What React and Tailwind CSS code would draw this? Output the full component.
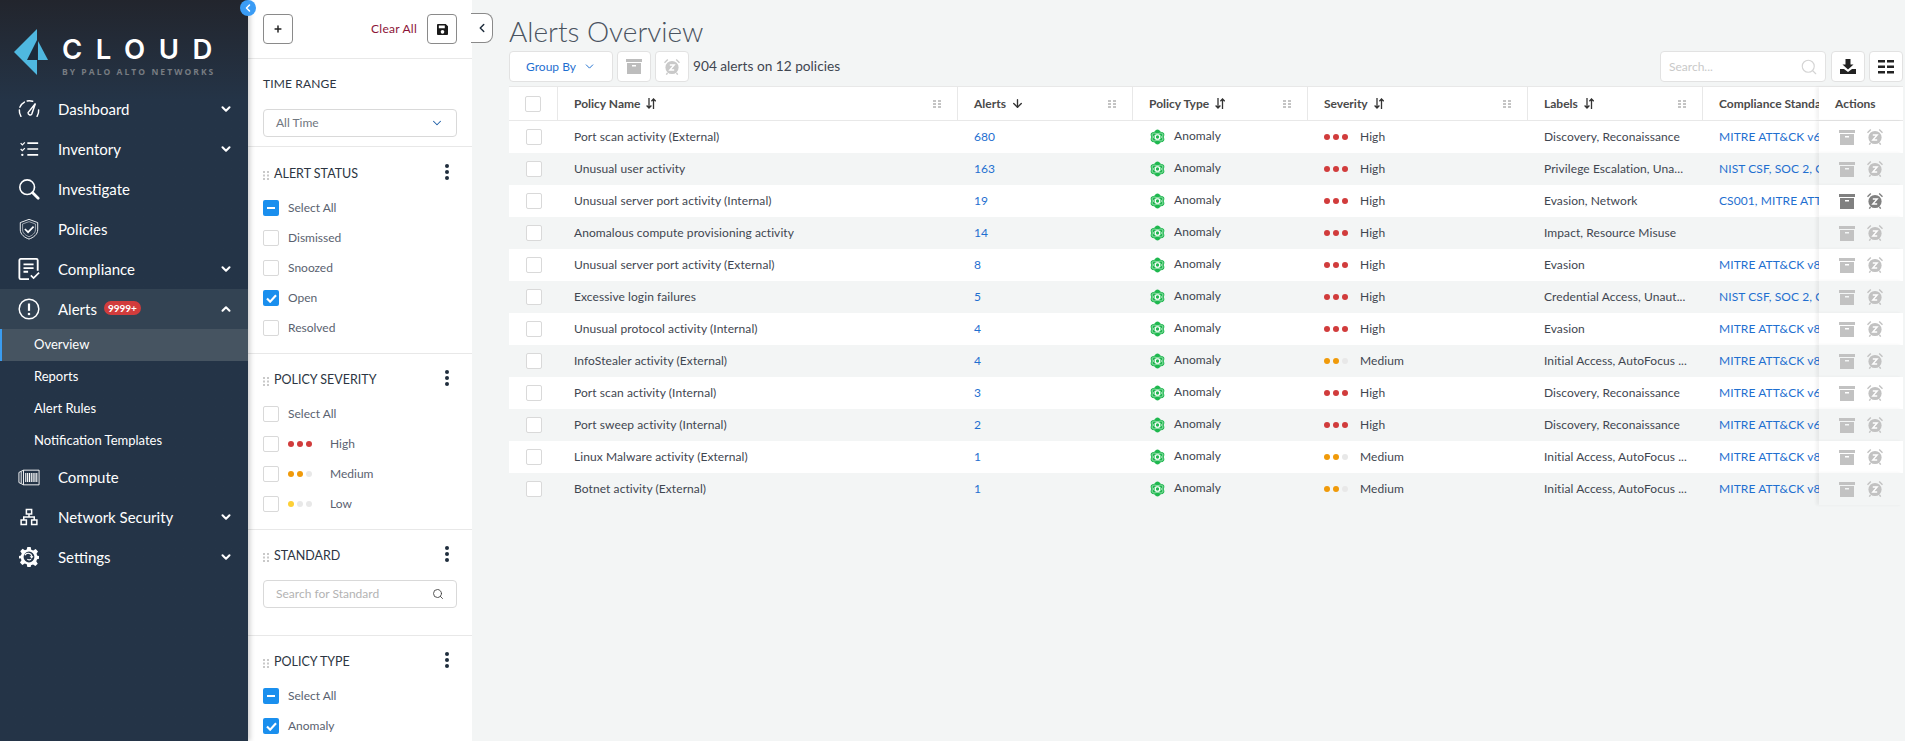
import React from "react";
import { ChevronDown, ChevronUp, ChevronLeft, ArrowDown, Search, Plus } from "lucide-react";

const GaugeIcon = () => (
  <svg viewBox="0 0 24 24" className="w-[22px] h-[22px]" fill="none" stroke="white" strokeWidth="1.6" strokeLinecap="round">
    <path d="M3.2 20A11 11 0 0 1 1.500 13" /><path d="M2 10A11 11 0 0 1 7 4.400" /><path d="M10 3.200a11 11 0 0 1 6 .4" /><path d="M22.500 13a11 11 0 0 1-1.700 7" /><path d="M11 16 19 6l-4 11.500a2.200 2.200 0 0 1-4-1.500z" />
  </svg>
);
const ListIcon = () => (
  <svg viewBox="0 0 24 24" className="w-[20px] h-[20px]" fill="none" stroke="white" strokeWidth="2">
    <path d="M10 5h13M10 12h13M10 19h13" /><path d="m2 5 2 2 3-3M2 12l2 2 3-3" strokeWidth="1.5" /><circle cx="4" cy="19" r="1.4" fill="white" stroke="none" />
  </svg>
);
const SearchBig = () => (
  <svg viewBox="0 0 24 24" className="w-[22px] h-[22px]" fill="none" stroke="white">
    <circle cx="10" cy="10" r="8" strokeWidth="1.8" /><path d="m16 16 6 6" strokeWidth="3" strokeLinecap="round" />
  </svg>
);
const ShieldIcon = () => (
  <svg viewBox="0 0 24 24" className="w-[22px] h-[22px]" fill="none" stroke="white" strokeWidth="1">
    <path d="M12 1.500 21.500 5v8c0 5-5 8.500-9.500 10C7.500 21.500 2.500 18 2.500 13V5z" /><path d="M12 4 19 6.500V13c0 3.500-3.500 6-7 7.500C8.500 19 5 16.500 5 13V6.500z" opacity=".6" /><path d="m7.500 12 3.500 3.500 6-6" strokeWidth="1.800" />
  </svg>
);
const ComplianceIcon = () => (
  <svg viewBox="0 0 24 24" className="w-[22px] h-[22px]" fill="none" stroke="white" strokeWidth="2">
    <path d="M12 23H3a1.500 1.500 0 0 1-1.500-1.500v-19A1.500 1.500 0 0 1 3 1h17a1.500 1.500 0 0 1 1.500 1.500V14" /><path d="M6 7h11M6 11h11M6 15h5" /><path d="m14 19 3 3 6-6" strokeWidth="1.8" />
  </svg>
);
const AlertCircle = () => (
  <svg viewBox="0 0 24 24" className="w-[22px] h-[22px]" fill="none" stroke="white" strokeWidth="1.600">
    <circle cx="12" cy="12" r="10.700" /><path d="M12 6v8" strokeWidth="2.400" /><circle cx="12" cy="17.500" r="1.400" fill="white" stroke="none" />
  </svg>
);
const ComputeIcon = () => (
  <svg viewBox="0 0 24 18" className="w-[22px] h-[17px]" fill="none" stroke="white" strokeWidth="1">
    <path d="M1 3.500 6 1h17v16H6l-5-2.500z" /><path d="M6 1v16" /><path d="M3.500 2.500v13" /><path d="M8.500 4v10M10.500 4v10M12.500 4v10M14.500 4v10M16.500 4v10M18.500 4v10M20.500 4v10" strokeWidth="1.200" />
  </svg>
);
const NetworkIcon = () => (
  <svg viewBox="0 0 24 24" className="w-[18px] h-[18px]" fill="none" stroke="white" strokeWidth="2">
    <rect x="8.500" y="2" width="7" height="6" /><rect x="1.500" y="16" width="7" height="6" /><rect x="15.500" y="16" width="7" height="6" /><path d="M12 8v4M5 16v-4h14v4" />
  </svg>
);
const GearIcon = () => (
  <svg viewBox="0 0 24 24" className="w-[20px] h-[20px]" fill="white">
    <path fillRule="evenodd" d="M10 0h4l.7 3.300 2.400 1 2.900-1.800 2.800 2.800-1.800 2.900 1 2.400L25 11v3l-3.300.7-1 2.400 1.800 2.900-2.800 2.800-2.900-1.800-2.400 1L14 24h-4l-.7-3.300-2.400-1L4 21.500l-2.800-2.800L3 15.800l-1-2.400L-1 14v-3l3.300-.7 1-2.400-1.800-2.900L4.300 2.200l2.900 1.800 2.100-.9zM12 5.500a6.500 6.500 0 1 0 0 13 6.500 6.500 0 0 0 0-13z" />
    <path d="M12 8a4 4 0 0 1 3.800 3h-2l2.500 3 2-3h-1a5.500 5.500 0 0 0-10-1.500l1.500.8A4 4 0 0 1 12 8z" transform="translate(-1 0)" />
    <path d="M9.500 15a4 4 0 0 0 5.500 0l-1-1a3 3 0 0 1-3.500 0z" />
  </svg>
);

const NavRow = ({ icon, label, chevron, active, badge }) => (
  <div className={`h-[40px] flex items-center shrink-0 pl-[17px] pr-[15px] ${active ? "bg-[#334353]" : ""}`}>
    <div className="w-[24px] flex justify-center shrink-0">{icon}</div>
    <span className="ml-[17px] text-[15px] text-white">{label}</span>
    {badge && <span className="ml-[7px] -mt-[2px] h-[14px] px-[4px] rounded-full bg-[#d13c3c] text-white text-[10px] leading-[14px] font-bold">{badge}</span>}
    <div className="ml-auto">
      {chevron === "down" && <ChevronDown size={14} strokeWidth={3.500} color="white" />}
      {chevron === "up" && <ChevronUp size={14} strokeWidth={3.500} color="white" />}
    </div>
  </div>
);
const SubRow = ({ label, active }) => (
  <div className={`h-[32px] flex items-center shrink-0 text-[13px] text-white pl-[34px] ${active ? "bg-[#465461] border-l-2 border-[#3a9cf0] !pl-[32px]" : ""}`}>{label}</div>
);

const Sidebar = () => (
  <aside className="relative z-10 w-[248px] shrink-0 flex flex-col bg-gradient-to-b from-[#22252d] to-[#243447] to-[100px] shadow-[2px_0_5px_rgba(0,0,0,0.2)]">
    <div className="h-[89px] shrink-0 flex items-center pl-[14px] pt-[15px]">
      <svg viewBox="0 0 35 46" className="w-[35px] h-[46px] shrink-0">
        <polygon points="0,23 23,0 23,46" fill="#4fb8e0" />
        <polygon points="13,31 23,11 23,31" fill="#1c2a3a" />
        <polygon points="24,12 34,31 24,31" fill="#4fb8e0" />
      </svg>
      <div className="ml-[13px] flex flex-col pt-[7px]">
        <span className="text-[27.500px] leading-[28px] font-semibold tracking-[13.500px] text-white font-['Inter',sans-serif]">CLOUD</span>
        <span className="mt-[4px] text-[8.500px] leading-[10px] font-bold tracking-[2.050px] text-[#777c82] font-['Open_Sans',sans-serif] whitespace-nowrap">BY PALO ALTO NETWORKS</span>
      </div>
    </div>
    <NavRow icon={<GaugeIcon />} label="Dashboard" chevron="down" />
    <NavRow icon={<ListIcon />} label="Inventory" chevron="down" />
    <NavRow icon={<SearchBig />} label="Investigate" />
    <NavRow icon={<ShieldIcon />} label="Policies" />
    <NavRow icon={<ComplianceIcon />} label="Compliance" chevron="down" />
    <NavRow icon={<AlertCircle />} label="Alerts" chevron="up" active badge="9999+" />
    <SubRow label="Overview" active />
    <SubRow label="Reports" />
    <SubRow label="Alert Rules" />
    <SubRow label="Notification Templates" />
    <NavRow icon={<ComputeIcon />} label="Compute" />
    <NavRow icon={<NetworkIcon />} label="Network Security" chevron="down" />
    <NavRow icon={<GearIcon />} label="Settings" chevron="down" />
    <button className="absolute -right-[8px] top-0 w-[16px] h-[16px] rounded-full bg-[#3a9cf5] flex items-center justify-center">
      <ChevronLeft size={12} strokeWidth={3} color="white" />
    </button>
  </aside>
);

const Grip = ({ className = "" }) => (
  <svg viewBox="0 0 8 8" className={`w-[8px] h-[8px] ${className}`} fill="#c4c4c4">
    <rect x="0" y="0" width="3" height="2" /><rect x="5" y="0" width="3" height="2" />
    <rect x="0" y="3" width="3" height="2" /><rect x="5" y="3" width="3" height="2" />
    <rect x="0" y="6" width="3" height="2" /><rect x="5" y="6" width="3" height="2" />
  </svg>
);
const GripSmall = () => (
  <svg viewBox="0 0 6 9" preserveAspectRatio="none" className="w-[6px] h-[9px] mr-[5px] mt-[2px] shrink-0" fill="#c9c9c9">
    {[0, 3.500, 7].map((y) => <g key={y}><rect x="0" y={y} width="2" height="2" /><rect x="4" y={y} width="2" height="2" /></g>)}
  </svg>
);
const Kebab = () => (
  <div className="flex flex-col gap-[2px] -mt-[4px]">
    <span className="w-[4px] h-[4px] rounded-full bg-[#1f2d3d]" />
    <span className="w-[4px] h-[4px] rounded-full bg-[#1f2d3d]" />
    <span className="w-[4px] h-[4px] rounded-full bg-[#1f2d3d]" />
  </div>
);
const Check = ({ state }) => {
  if (state === "minus")
    return <span className="w-[16px] h-[16px] shrink-0 rounded-[2px] bg-[#1a8fee] flex items-center justify-center"><span className="w-[8px] h-[2px] bg-white" /></span>;
  if (state === "check")
    return (
      <span className="w-[16px] h-[16px] shrink-0 rounded-[2px] bg-[#1a8fee] flex items-center justify-center">
        <svg viewBox="0 0 12 10" className="w-[11px] h-[9px]" fill="none" stroke="white" strokeWidth="2.400"><path d="m1 5 3.500 3.500L11 1.500" /></svg>
      </span>
    );
  return <span className="w-[16px] h-[16px] shrink-0 rounded-[2px] border border-[#d9d9d9] bg-white" />;
};
const Dots = ({ on, color }) => (
  <div className="flex items-center w-[24px] justify-between shrink-0">
    {[0, 1, 2].map((i) => (
      <span key={i} className="w-[6px] h-[6px] rounded-full" style={{ background: i < on ? color : "#e8e8e8" }} />
    ))}
  </div>
);
const FilterRow = ({ state, label, dots }) => (
  <div className="h-[30px] flex items-center">
    <Check state={state} />
    {dots ? (
      <div className="ml-[9px] flex items-center">
        {dots}
        <span className="ml-[18px] text-[12px] text-[#5a6270]">{label}</span>
      </div>
    ) : (
      <span className="ml-[9px] text-[12px] text-[#5a6270]">{label}</span>
    )}
  </div>
);
const FilterHead = ({ label }) => (
  <div className="h-[20px] flex items-center">
    <GripSmall />
    <span className="text-[12.500px] text-[#2c3542]">{label}</span>
    <div className="ml-auto mr-[8px]"><Kebab /></div>
  </div>
);
const Field = ({ className = "", children }) => (
  <div className={`h-[28px] rounded-[4px] border border-[#d9d9d9] bg-white flex items-center px-[12px] text-[12px] ${className}`}>{children}</div>
);

const FilterPanel = () => (
  <section className="relative w-[224px] shrink-0 bg-white flex flex-col overflow-visible">
    <div className="h-[59px] shrink-0 border-b border-[#e8e8e8] flex items-center pl-[15px] pr-[15px]">
      <button className="w-[30px] h-[30px] rounded-[4px] border border-[#8a8a8a] flex items-center justify-center">
        <Plus size={10} strokeWidth={3.500} color="#222" />
      </button>
      <span className="ml-auto text-[12px] tracking-[0.250px] text-[#8c1438]">Clear All</span>
      <button className="ml-[10px] w-[30px] h-[30px] rounded-[4px] border border-[#8a8a8a] flex items-center justify-center">
        <svg viewBox="0 0 12 12" className="w-[11px] h-[11px]" fill="#1a1a1a"><path fillRule="evenodd" d="M1 0h8.500L12 2.500V11a1 1 0 0 1-1 1H1a1 1 0 0 1-1-1V1a1 1 0 0 1 1-1zm1 1.500V4.500h6.500V1.500zM6 6.500a2 2 0 1 0 0 4 2 2 0 0 0 0-4z" /></svg>
      </button>
    </div>
    <div className="h-[88px] shrink-0 border-b border-[#e8e8e8] pl-[15px] pr-[15px] pt-[15px]">
      <div className="h-[20px] leading-[20px] text-[12px] tracking-[0.150px] text-[#2c3542]">TIME RANGE</div>
      <Field className="mt-[15px] justify-between text-[#6f7680]">
        <span>All Time</span>
        <ChevronDown size={14} strokeWidth={1.800} color="#1f5fa8" />
      </Field>
    </div>
    <div className="h-[207px] shrink-0 border-b border-[#e8e8e8] pl-[15px] pr-[15px] pt-[17px]">
      <FilterHead label="ALERT STATUS" />
      <div className="mt-[9px]">
        <FilterRow state="minus" label="Select All" />
        <FilterRow label="Dismissed" />
        <FilterRow label="Snoozed" />
        <FilterRow state="check" label="Open" />
        <FilterRow label="Resolved" />
      </div>
    </div>
    <div className="h-[176px] shrink-0 border-b border-[#e8e8e8] pl-[15px] pr-[15px] pt-[16px]">
      <FilterHead label="POLICY SEVERITY" />
      <div className="mt-[9px]">
        <FilterRow label="Select All" />
        <FilterRow label="High" dots={<Dots on={3} color="#d13c3c" />} />
        <FilterRow label="Medium" dots={<Dots on={2} color="#f09a0a" />} />
        <FilterRow label="Low" dots={<Dots on={1} color="#fdd036" />} />
      </div>
    </div>
    <div className="h-[106px] shrink-0 border-b border-[#e8e8e8] pl-[15px] pr-[15px] pt-[16px]">
      <FilterHead label="STANDARD" />
      <Field className="mt-[14px] justify-between text-[#b3b3b3]">
        <span>Search for Standard</span>
        <Search size={12} strokeWidth={1.800} color="#444" />
      </Field>
    </div>
    <div className="pl-[15px] pr-[15px] pt-[16px]">
      <FilterHead label="POLICY TYPE" />
      <div className="mt-[9px]">
        <FilterRow state="minus" label="Select All" />
        <FilterRow state="check" label="Anomaly" />
      </div>
    </div>
    <button className="absolute -right-[21px] top-[13px] w-[22px] h-[30px] bg-white border border-l-0 border-[#8a8a8a] rounded-r-[8px] flex items-center justify-center">
      <ChevronLeft size={14} strokeWidth={2.500} color="#1f2d3d" />
    </button>
  </section>
);

const ArchiveIcon = ({ color, w = 16 }) => (
  <svg viewBox="0 0 16 15" style={{ width: w, height: (w * 15) / 16 }} fill={color}>
    <rect x="0" y="0" width="16" height="3" />
    <path fillRule="evenodd" d="M1 4h14v11H1zM6 6v1.500h4V6z" />
  </svg>
);
const AlarmIcon = ({ color, w = 16 }) => (
  <svg viewBox="0 0 16 16" style={{ width: w, height: w }}>
    <circle cx="8" cy="8.500" r="6.600" fill={color} />
    <path d="M.5 3.800 3.800.6M15.500 3.800 12.200.6M3.500 14l-1.200 1.600M12.500 14l1.200 1.600" stroke={color} strokeWidth="1.400" fill="none" />
    <path d="M5.800 6h4.400L5.800 11h4.400" stroke="white" strokeWidth="1.400" fill="none" />
  </svg>
);
const Sort = () => (
  <svg viewBox="0 0 10 11" className="w-[10px] h-[11px] ml-[6px] shrink-0" fill="none" stroke="#333" strokeWidth="1.300">
    <path d="M3 0v10M.6 7.500 3 10l2.400-2.500" />
    <path d="M7.500 11V1M5.400 3.200 7.500 1l2.200 2.200" />
  </svg>
);
const AnomalyIcon = () => (
  <svg viewBox="0 0 16 16" className="w-[15px] h-[16px] ml-[1px] -mt-[1px] shrink-0">
    <g fill="#1fb84f">
      <ellipse cx="8" cy="8" rx="4.600" ry="8" />
      <ellipse cx="8" cy="8" rx="4.600" ry="8" transform="rotate(60 8 8)" />
      <ellipse cx="8" cy="8" rx="4.600" ry="8" transform="rotate(-60 8 8)" />
    </g>
    <g fill="none" stroke="white" strokeWidth=".6" opacity=".8">
      <ellipse cx="8" cy="8" rx="3" ry="6.500" transform="rotate(60 8 8)" />
      <ellipse cx="8" cy="8" rx="3" ry="6.500" transform="rotate(-60 8 8)" />
    </g>
    <circle cx="8" cy="8" r="2.400" fill="#1fb84f" stroke="white" strokeWidth="1.300" />
  </svg>
);

const rows = [
  ["Port scan activity (External)", "680", 3, "Discovery, Reconaissance", "MITRE ATT&CK v6.3, NIST"],
  ["Unusual user activity", "163", 3, "Privilege Escalation, Una...", "NIST CSF, SOC 2, GDPR, ISO"],
  ["Unusual server port activity (Internal)", "19", 3, "Evasion, Network", "CS001, MITRE ATT&CK v8"],
  ["Anomalous compute provisioning activity", "14", 3, "Impact, Resource Misuse", ""],
  ["Unusual server port activity (External)", "8", 3, "Evasion", "MITRE ATT&CK v8, NIST"],
  ["Excessive login failures", "5", 3, "Credential Access, Unaut...", "NIST CSF, SOC 2, GDPR, ISO"],
  ["Unusual protocol activity (Internal)", "4", 3, "Evasion", "MITRE ATT&CK v8, NIST"],
  ["InfoStealer activity (External)", "4", 2, "Initial Access, AutoFocus ...", "MITRE ATT&CK v8, NIST"],
  ["Port scan activity (Internal)", "3", 3, "Discovery, Reconaissance", "MITRE ATT&CK v6.3, NIST"],
  ["Port sweep activity (Internal)", "2", 3, "Discovery, Reconaissance", "MITRE ATT&CK v6.3, NIST"],
  ["Linux Malware activity (External)", "1", 2, "Initial Access, AutoFocus ...", "MITRE ATT&CK v8, NIST"],
  ["Botnet activity (External)", "1", 2, "Initial Access, AutoFocus ...", "MITRE ATT&CK v8, NIST"],
];

const HeadCell = ({ w, label, icon }) => (
  <div className={`${w} h-full shrink-0 flex items-center pl-[16px] pr-[16px] border-r border-[#e8e8e8] font-bold text-[12px] text-[#4a4a4a]`}>
    <span className="whitespace-nowrap">{label}</span>
    {icon}
    <Grip className="ml-auto" />
  </div>
);

const Table = () => (
  <div className="mt-[4px] mr-[2px] flex flex-col">
    <div className="h-[35px] bg-white border-y border-[#e8e8e8] flex items-center">
      <div className="w-[49px] h-full shrink-0 flex items-center justify-center border-r border-[#e8e8e8]"><Check /></div>
      <HeadCell w="w-[400px]" label="Policy Name" icon={<Sort />} />
      <HeadCell w="w-[175px]" label="Alerts" icon={<ArrowDown size={13} strokeWidth={2.500} color="#333" className="ml-[5px]" />} />
      <HeadCell w="w-[175px]" label="Policy Type" icon={<Sort />} />
      <HeadCell w="w-[220px]" label="Severity" icon={<Sort />} />
      <HeadCell w="w-[175px]" label="Labels" icon={<Sort />} />
      <div className="flex-1 min-w-0 overflow-hidden h-full flex items-center pl-[16px] font-bold text-[12px] text-[#4a4a4a] whitespace-nowrap">Compliance Standard</div>
      <div className="relative w-[84px] h-full shrink-0 flex items-center pl-[16px] bg-white font-bold text-[12px] text-[#4a4a4a] shadow-[-3px_0_3px_rgba(0,0,0,0.05)]">Actions</div>
    </div>
    {rows.map((r, i) => {
      const bg = i % 2 === 0 ? "bg-white" : "bg-[#f3f5f5]";
      const dark = i === 2;
      return (
        <div key={i} className={`h-[32px] flex items-center text-[12px] tracking-[0.080px] text-[#3f4650] ${bg}`}>
          <div className="w-[49px] shrink-0 flex justify-center"><Check /></div>
          <div className="w-[400px] shrink-0 pl-[16px] whitespace-nowrap">{r[0]}</div>
          <div className="w-[175px] shrink-0 pl-[16px] text-[#1f6fd0]">{r[1]}</div>
          <div className="w-[175px] shrink-0 pl-[16px] flex items-center">
            <AnomalyIcon /><span className="ml-[9px] -mt-[2px]">Anomaly</span>
          </div>
          <div className="w-[220px] shrink-0 pl-[16px] flex items-center">
            <Dots on={r[2]} color={r[2] === 3 ? "#d13c3c" : "#f09a0a"} />
            <span className="ml-[12px]">{r[2] === 3 ? "High" : "Medium"}</span>
          </div>
          <div className="w-[175px] shrink-0 pl-[16px] whitespace-nowrap">{r[3]}</div>
          <div className="flex-1 min-w-0 overflow-hidden pl-[16px] whitespace-nowrap text-[#1f6fd0]">{r[4]}</div>
          <div className={`relative w-[84px] h-full shrink-0 flex items-center pl-[20px] gap-[12px] ${bg} shadow-[-3px_0_3px_rgba(0,0,0,0.05)]`}>
            <ArchiveIcon color={dark ? "#808080" : "#c2c2c2"} />
            <AlarmIcon color={dark ? "#808080" : "#c2c2c2"} />
          </div>
        </div>
      );
    })}
  </div>
);

const IconBtn = ({ children }) => (
  <button className="w-[34px] h-[31px] bg-white rounded-[4px] border border-[#e2e2e2] flex items-center justify-center shrink-0">{children}</button>
);

const Main = () => (
  <main className="flex-1 min-w-0 pl-[37px] flex flex-col">
    <h1 className="mt-[14px] h-[34px] text-[28px] leading-[34px] font-light text-[#4a5360]">Alerts Overview</h1>
    <div className="mt-[3px] flex items-center h-[31px] mr-[2px]">
      <button className="w-[104px] h-[31px] bg-white rounded-[4px] border border-[#e2e2e2] flex items-center justify-center gap-[7px] text-[12px] text-[#1f6fd0]">
        Group By <ChevronDown size={13} strokeWidth={1.800} color="#1f6fd0" />
      </button>
      <div className="ml-[4px]"><IconBtn><ArchiveIcon color="#bdbdbd" /></IconBtn></div>
      <div className="ml-[4px]"><IconBtn><AlarmIcon color="#c9c9c9" /></IconBtn></div>
      <span className="ml-[4px] text-[13.700px] text-[#3f4650]">904 alerts on 12 policies</span>
      <div className="ml-auto w-[166px] h-[31px] bg-white rounded-[4px] border border-[#e2e2e2] flex items-center justify-between pl-[8px] pr-[7px] text-[12px] text-[#c9c9c9]">
        <span>Search...</span>
        <Search size={18} strokeWidth={1.500} color="#d4d4d4" />
      </div>
      <div className="ml-[5px]"><IconBtn>
        <svg viewBox="0 0 16 15" className="w-[16px] h-[15px]" fill="#222"><path d="M5.500 0h5v5.500h3L8 10.500l-5.500-5h3z" /><path d="M0 10h4l4 3 4-3h4v5H0z" /></svg>
      </IconBtn></div>
      <div className="ml-[4px]"><IconBtn>
        <svg viewBox="0 0 16 14" className="w-[16px] h-[14px]" fill="#222">
          {[0, 5.500, 11].map((y) => <g key={y}><rect x="0" y={y} width="7" height="2.500" /><rect x="9" y={y} width="7" height="2.500" /></g>)}
        </svg>
      </IconBtn></div>
    </div>
    <Table />
  </main>
);

export default function App() {
  return (
    <div className="h-screen w-full flex overflow-hidden bg-[#f3f5f5] font-['Lato',sans-serif]">
      <Sidebar />
      <FilterPanel />
      <Main />
    </div>
  );
}
